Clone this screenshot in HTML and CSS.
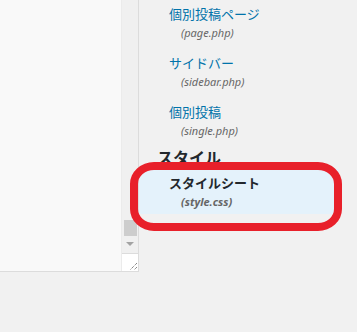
FILE: index.html
```html
<!DOCTYPE html>
<html lang="ja">
<head>
    <meta charset="UTF-8">
    <title>テーマの編集</title>
    <link rel="stylesheet" href="styles.css">
</head>
<body>
    <div class="wrap">
        <div class="editor">
            <div class="code-area"></div>
            <div class="scrollbar">
                <div class="track">
                    <div class="thumb"></div>
                    <div class="arrow"></div>
                </div>
                <div class="resize">
                    <svg width="10" height="10" viewBox="0 0 10 10">
                        <path d="M9 2 L2 9 M9 6 L6 9" stroke="#555" stroke-width="1" stroke-dasharray="1 1" fill="none"/>
                    </svg>
                </div>
            </div>
        </div>

        <div class="sidebar">
            <ul class="file-list">
                <li>
                    <a href="#">個別投稿ページ</a>
                    <span class="file-name">(page.php)</span>
                </li>
                <li>
                    <a href="#">サイドバー</a>
                    <span class="file-name">(sidebar.php)</span>
                </li>
                <li>
                    <a href="#">個別投稿</a>
                    <span class="file-name">(single.php)</span>
                </li>
            </ul>
            <h2 class="group-title">スタイル</h2>
            <ul class="file-list">
                <li class="current">
                    <a href="#">スタイルシート</a>
                    <span class="file-name">(style.css)</span>
                </li>
            </ul>
        </div>

        <!-- annotation -->
        <div class="marker"></div>
    </div>
</body>
</html>
```

FILE: styles.css
```css
body {
    margin: 0;
    background-color: #f1f1f1;
    font-family: "Noto Sans", "Noto Sans CJK JP", sans-serif;
    color: #23282d;
}
.wrap {
    display: flex;
    align-items: flex-start;
    position: relative;
}
.editor {
    width: 138px;
    height: 271px;
    display: flex;
    border-right: 1px solid #dcdcdc;
    border-bottom: 1px solid #dcdcdc;
    background-color: #f9f9f9;
}
.code-area {
    flex: 1;
}
.scrollbar {
    width: 16px;
    display: flex;
    flex-direction: column;
    border-left: 1px solid #ebebeb;
    background-color: #f0f0f0;
}
.track {
    flex: 1;
    display: flex;
    flex-direction: column;
    justify-content: flex-end;
    align-items: center;
    padding-bottom: 7px;
}
.thumb {
    width: 13px;
    height: 16px;
    background-color: #cdcdcd;
}
.arrow {
    margin-top: 6px;
    width: 0;
    height: 0;
    border-left: 4px solid transparent;
    border-right: 4px solid transparent;
    border-top: 4px solid #a3a3a3;
}
.resize {
    height: 17px;
    background-color: #fff;
    border-top: 1px solid #dcdcdc;
    display: flex;
    justify-content: flex-end;
    align-items: flex-end;
}
.sidebar {
    flex: 1;
    padding-top: 4px;
}
.file-list {
    list-style: none;
    margin: 0;
    padding: 0;
}
.file-list li {
    padding-left: 30px;
    margin-bottom: 11px;
}
.file-list a {
    display: block;
    font-size: 13px;
    line-height: 20px;
    color: #0073aa;
    text-decoration: none;
}
.file-name {
    display: block;
    padding-left: 12px;
    font-size: 11px;
    line-height: 18px;
    font-style: italic;
    color: #666;
}
.group-title {
    margin: -4px 0 0 18px;
    font-size: 16px;
    line-height: 22px;
    font-weight: bold;
    color: #23282d;
}
.file-list li.current {
    margin-right: 18px;
    padding-top: 4px;
    padding-bottom: 3px;
    background-color: #e4f2fb;
}
.current a {
    color: #23282d;
    font-weight: bold;
}
.current .file-name {
    font-weight: bold;
}
.marker {
    position: absolute;
    left: 130px;
    top: 162px;
    width: 196px;
    height: 53px;
    border: 8px solid #e8202a;
    border-radius: 24px / 22px;
}
```
